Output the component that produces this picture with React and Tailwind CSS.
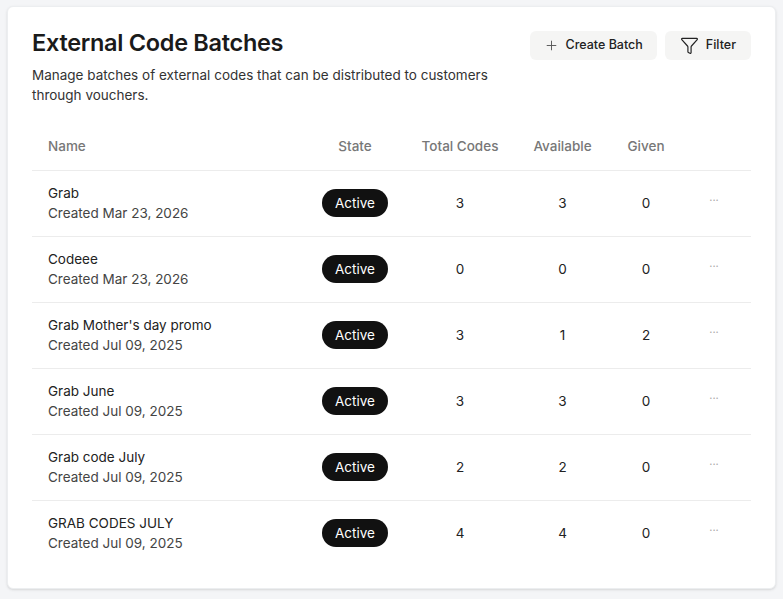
import React from "react";
import { Plus, Funnel } from "lucide-react";

const rows = [
  ["Grab", "Mar 23, 2026", 3, 3, 0],
  ["Codeee", "Mar 23, 2026", 0, 0, 0],
  ["Grab Mother's day promo", "Jul 09, 2025", 3, 1, 2],
  ["Grab June", "Jul 09, 2025", 3, 3, 0],
  ["Grab code July", "Jul 09, 2025", 2, 2, 0],
  ["GRAB CODES JULY", "Jul 09, 2025", 4, 4, 0],
];

export default function App() {
  return (
    <div className="min-h-screen bg-[#f4f5f7] pt-[6px] px-[7px] pb-[9px]" style={{ fontFamily: "Inter, sans-serif" }}>
      <div className="bg-white rounded-md shadow-sm border border-[#eceef0] px-6 pt-[22px] pb-[22px]">
        <div className="flex justify-between">
          <div>
            <h1 className="text-[23.5px] leading-[28px] font-semibold text-[#1a1a1a] tracking-[-0.3px]">External Code Batches</h1>
            <p className="mt-[8px] text-[13.5px] leading-[20px] text-[#333] w-[490px]">
              Manage batches of external codes that can be distributed to customers through vouchers.
            </p>
          </div>
          <div className="flex gap-2 items-start pt-[2px]">
            <button className="h-[29px] px-[14px] rounded-md bg-[#f5f5f4] flex items-center gap-[7px] text-[12.5px] font-medium text-[#222]">
              <Plus size={15} strokeWidth={1.5} className="text-[#555]" /> Create Batch
            </button>
            <button className="h-[29px] px-[15px] rounded-md bg-[#f5f5f4] flex items-center gap-[7px] text-[12.5px] font-medium text-[#222]">
              <Funnel size={19} strokeWidth={1.5} /> Filter
            </button>
          </div>
        </div>
        <table className="w-full mt-[17px] text-[13.5px]">
          <thead>
            <tr className="border-b border-[#ececec] text-[#777] h-[48px]">
              <th className="text-left font-medium pl-4">Name</th>
              <th className="font-medium w-[110px]">State</th>
              <th className="font-medium w-[100px]">Total Codes</th>
              <th className="font-medium w-[105px]">Available</th>
              <th className="font-medium w-[62px]">Given</th>
              <th className="w-[74px]"></th>
            </tr>
          </thead>
          <tbody>
            {rows.map((r, i) => (
              <tr key={i} className={`h-[66px] text-[#222] ${i < rows.length - 1 ? "border-b border-[#ececec]" : ""}`}>
                <td className="pl-4 leading-[20px]">
                  <div>{r[0]}</div>
                  <div className="text-[#444]">Created {r[1]}</div>
                </td>
                <td className="text-center">
                  <span className="inline-block bg-[#111] text-white rounded-full px-[13px] py-[4px] text-[13.5px] leading-[20px]">Active</span>
                </td>
                <td className="text-center">{r[2]}</td>
                <td className="text-center">{r[3]}</td>
                <td className="text-center">{r[4]}</td>
                <td className="text-center text-[#aaa] text-[11px] align-middle pb-[6px]">···</td>
              </tr>
            ))}
          </tbody>
        </table>
      </div>
    </div>
  );
}
